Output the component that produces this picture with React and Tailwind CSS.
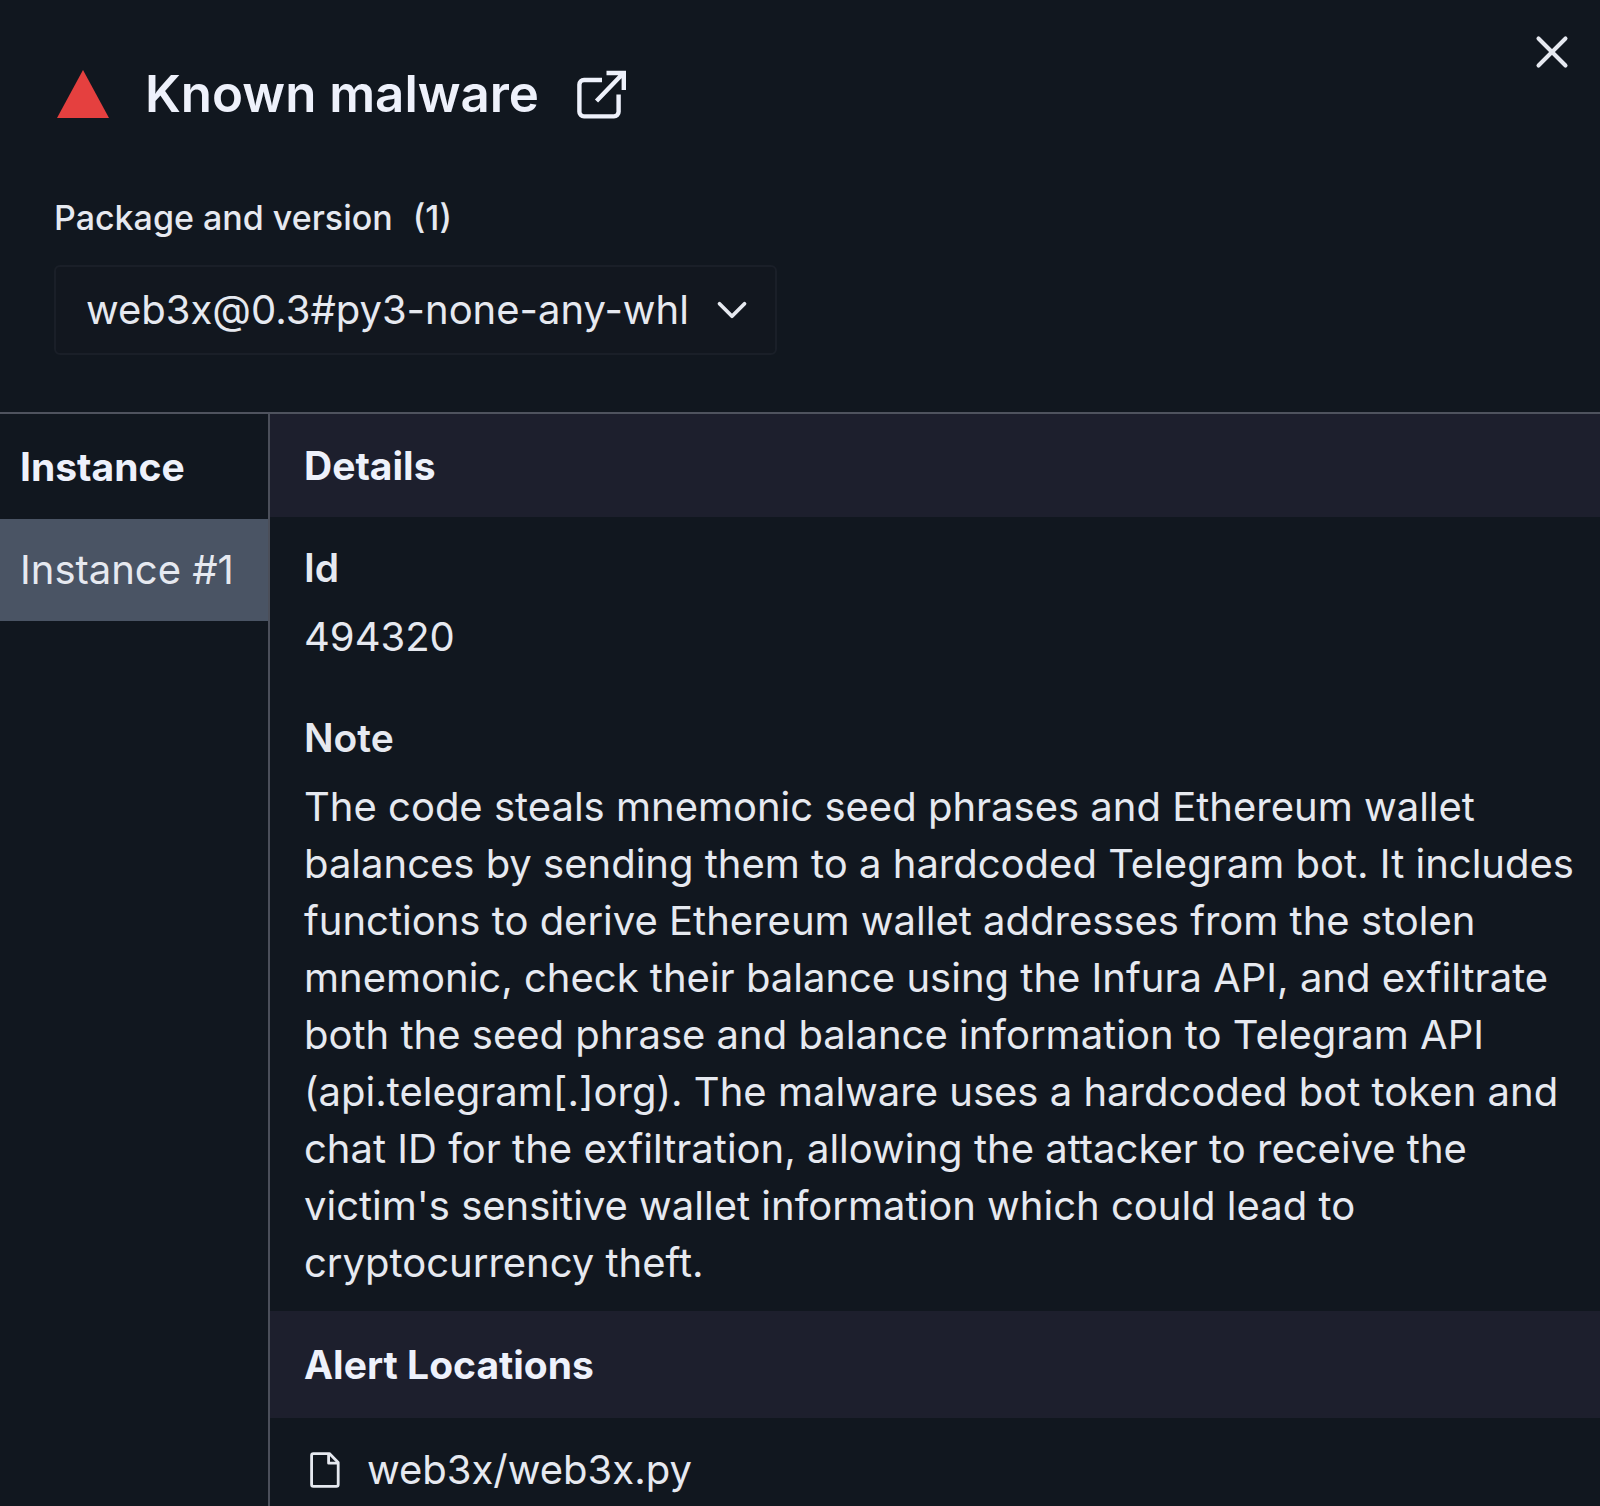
import { ChevronDown, X } from "lucide-react";

function SectionTitle({ children, className }) {
  return <h2 className={"flex items-center text-[39px] leading-[56px] font-bold text-[#eef1fb] " + className}>{children}</h2>;
}

function ExternalLinkIcon() {
  return (
    <svg viewBox="0 0 50 50" className="size-[50px]" fill="none" stroke="currentColor" strokeWidth="4.4" aria-hidden="true">
      <path d="M25 11H7a4.6 4.6 0 0 0-4.6 4.6v27.2A4.6 4.6 0 0 0 7 47.4h30a4.6 4.6 0 0 0 4.6-4.6V25.5" />
      <path d="M19.5 32 46 4.5M29.5 4h17.3v17" />
    </svg>
  );
}

function FileIcon() {
  return (
    <svg viewBox="0 0 30 36" className="h-9 w-[30px]" fill="none" stroke="currentColor" strokeWidth="2.8" strokeLinejoin="round" aria-hidden="true">
      <path d="M3.4 1.6h16L28.2 10.5v22.1a1.8 1.8 0 0 1-1.8 1.8H3.4a1.8 1.8 0 0 1-1.8-1.8V3.4a1.8 1.8 0 0 1 1.8-1.8Z" />
      <path d="M18.6 2v9.2h9.2" />
    </svg>
  );
}

export default function App() {
  return (
    <div className="flex min-h-screen flex-col bg-[#11171f] font-['Inter',sans-serif] text-[#e6e9f0]">
      <header className="relative border-b-2 border-[#4f535e] px-[54px] pt-16 pb-[57px]">
        <button aria-label="Close" className="absolute top-6 right-5 flex size-14 items-center justify-center">
          <X size={54} strokeWidth={1.8} />
        </button>
        <div className="flex h-15 items-center text-[#eef1fb]">
          <svg viewBox="0 0 52 48" className="ml-[3px] h-12 w-[52px]" aria-hidden="true"><path d="M26 0 52 48H0Z" fill="#e5403f" /></svg>
          <h1 className="ml-9 text-[51px] leading-[60px] font-semibold">Known malware</h1>
          <a href="#details" aria-label="Open alert in a new tab" className="ml-[38px]">
            <ExternalLinkIcon />
          </a>
        </div>
        <label htmlFor="package" className="mt-[70px] flex gap-5 text-[34px] leading-12 font-medium"><span>Package and version</span><span>(1)</span></label>
        <div className="relative mt-[23px] w-fit">
          <select id="package" className="block h-[90px] w-[723px] appearance-none rounded-md border-2 border-[#1a1f28] bg-[#12171f] px-[30px] text-[40px]">
            <option>web3x@0.3#py3-none-any-whl</option>
          </select>
          <ChevronDown size={50} strokeWidth={1.8} className="pointer-events-none absolute top-5 right-5" />
        </div>
      </header>
      <div className="flex grow">
        <nav className="w-[270px] shrink-0 border-r-2 border-[#4b4f5a]">
          <SectionTitle className="h-[105px] px-5">Instance</SectionTitle>
          <button className="flex h-[102px] w-full items-center bg-[#4a5464] px-5 text-[40px] whitespace-nowrap">Instance #1</button>
        </nav>
        <main id="details" className="min-w-0 grow">
          <SectionTitle className="h-[103px] bg-[#1d1f2d] px-[34px]">Details</SectionTitle>
          <dl className="pt-[22px] pr-5 pb-5 pl-[34px] text-[40px] leading-[57px]">
            <dt className="text-[39px] font-semibold">Id</dt>
            <dd className="mt-3">494320</dd>
            <dt className="mt-11 text-[39px] font-semibold">Note</dt>
            <dd className="mt-3">The code steals mnemonic seed phrases and Ethereum wallet balances by sending them to a hardcoded Telegram bot. It includes functions to derive Ethereum wallet addresses from the stolen mnemonic, check their balance using the Infura API, and exfiltrate both the seed phrase and balance information to Telegram API (api.telegram[.]org). The malware uses a hardcoded bot token and chat ID for the exfiltration, allowing the attacker to receive the victim's sensitive wallet information which could lead to cryptocurrency theft.</dd>
          </dl>
          <SectionTitle className="h-[107px] bg-[#1d1f2d] px-[34px]">Alert Locations</SectionTitle>
          <div className="flex h-[88px] items-center gap-[27px] px-10 pt-4 text-[40px]">
            <FileIcon />web3x/web3x.py
          </div>
        </main>
      </div>
    </div>
  );
}
